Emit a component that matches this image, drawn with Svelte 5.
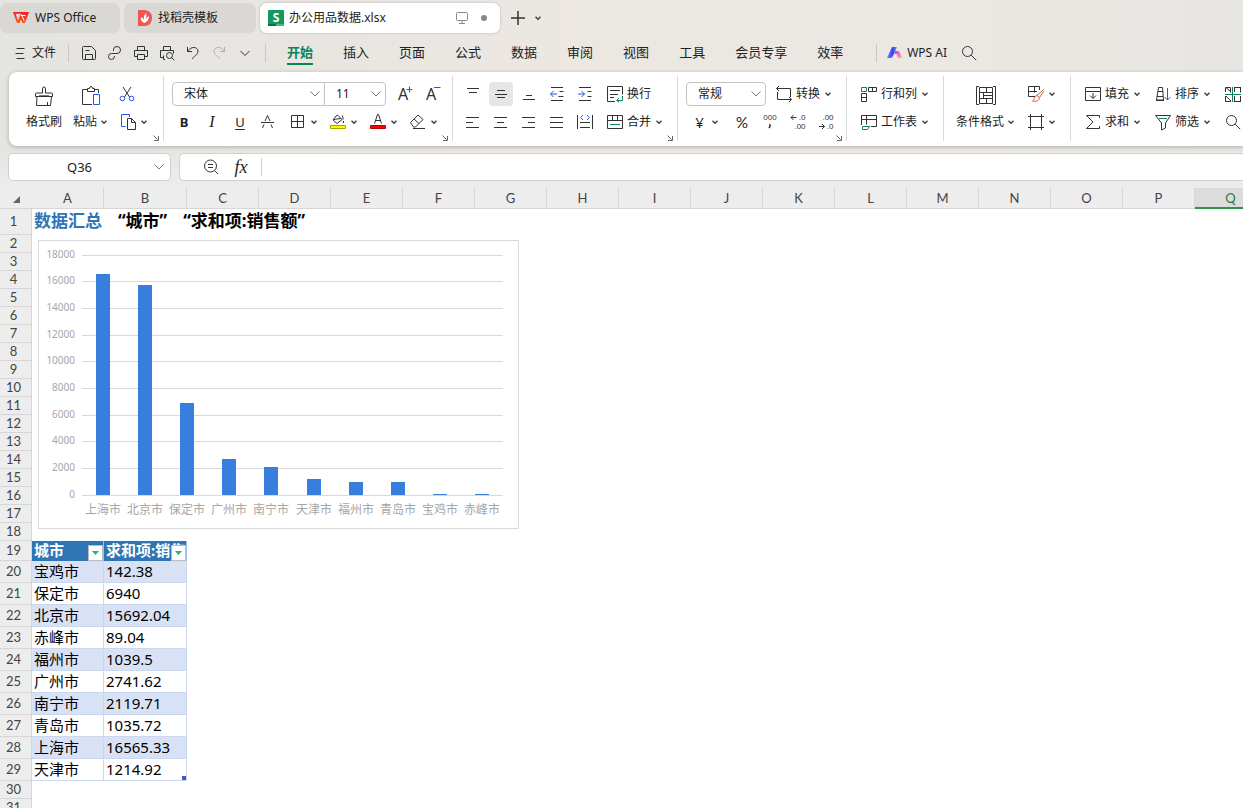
<script>
  const menus = ["开始", "插入", "页面", "公式", "数据", "审阅", "视图", "工具", "会员专享", "效率"];
  const columns = "ABCDEFGHIJKLMNOPQR".split("");

  const records = [
    ["宝鸡市", 142.38],
    ["保定市", 6940],
    ["北京市", 15692.04],
    ["赤峰市", 89.04],
    ["福州市", 1039.5],
    ["广州市", 2741.62],
    ["南宁市", 2119.71],
    ["青岛市", 1035.72],
    ["上海市", 16565.33],
    ["天津市", 1214.92],
  ];
  const ranked = [...records].sort((a, b) => b[1] - a[1]);
  const ticks = [0, 2000, 4000, 6000, 8000, 10000, 12000, 14000, 16000, 18000];

  const plot = { left: 43, right: 465, bottom: 255, height: 240, max: 18000 };
  const step = (plot.right - plot.left) / ranked.length;
  const yOf = (v) => Math.floor(plot.bottom - (v / plot.max) * plot.height);
  const barTop = (v) => Math.round(plot.bottom + 0.5 - (v / plot.max) * (plot.height + 1));
  const xOf = (i) => Math.ceil(plot.left + step * (i + 0.5));

  const ink = "#333";
  const blue = "#2458e6";
  const green = "#0b8457";
  const orange = "#d2622a";

  // every icon is a list of strokes (d), fills (f) or small labels (t)
  const icons = {
    menu: [{ d: "M4.5 3.5h8M3.5 8.5h8M4.5 13.5h8" }],
    save: [{ d: "M1.5 2.5q0-1 1-1h8l4 4v8q0 1-1 1h-11q-1 0-1-1zM4.5 14v-4.5h7V14M4.5 5.5h4" }],
    share: [{ d: "M6.5 6V4.5Q6.5 1.5 10 1.5Q13.5 1.5 13.5 5Q13.5 8.5 10 8.5H4.5Q1.5 8.500 1.5 11.5Q1.5 14.5 4.500 14.5Q7.5 14.5 7.5 11" }],
    print: [{ d: "M4.5 5.5v-4h7v4M4.5 11.5h-3v-6h13v6h-3M4.5 9.5h7v5h-7z" }],
    preview: [{ d: "M4.5 5.5v-4h7v4M4.5 12.5h-3v-7h13v3M6 14.5H4.5v-4M13.5 10.5a3 3 0 1 1-6 0a3 3 0 1 1 6 0M12.7 12.7l2.5 2.5" }],
    undo: [{ d: "M2.5 2v4.500h4.5M2.8 6.2C6 1 12.5 1.500 13 6c0 4-4 5-6 8" }],
    redo: [{ d: "M13.5 2v4.500h-4.5M13.2 6.2C10 1 3.5 1.500 3 6c0 4 4 5 6 8", c: "#b2b0ad" }],
    down: [{ d: "M3.5 6l4.5 4.5L12.5 6" }],
    search: [{ d: "M11.5 6.5a5 5 0 1 1-10 0a5 5 0 1 1 10 0M10.2 10.2l5 5" }],
    monitor: [{ d: "M2.5 3.5q0-1 1-1h9q1 0 1 1v6q0 1-1 1h-9q-1 0-1-1zM8 10.5v3M5 13.5h6", c: "#888" }],
    plus: [{ d: "M8 1v14M1 8h14", w: 1.5 }],
    cut: [
      { d: "M3 1l6.5 10M11 1L4.5 11" },
      { d: "M4.7 12.5a2.300 2.300 0 1 1-4.600 0a2.300 2.300 0 1 1 4.600 0M13.9 12.5a2.300 2.300 0 1 1-4.600 0a2.300 2.300 0 1 1 4.600 0", c: blue },
    ],
    copy: [
      { d: "M5.5 12.500H1.5V.5h8V3", c: blue },
      { d: "M7.500 4.5h4l4 4v7h-8zM11.5 4.5v4h4" },
    ],
    border: [{ d: "M1.5 1.5h12v12h-12zM7.5 1.5v12M1.5 7.5h12" }],
    fill: [
      { d: "M6 2L3 6l4 3.500l5-4L7.5 1zM3.500 5.500l7.500-1M12 1.500q1.500 2 1 4M13.500 7v2" },
      { f: "M1 11h14q1 0 1 1v2q0 1-1 1H1q-1 0-1-1v-2q0-1 1-1z", c: "#a8a800" },
      { f: "M1 12h14v2H1z", c: "#ff0" },
    ],
    color: [
      { d: "M4.500 9.500L7.500 .500h1L11.500 9.500M5.500 6.500h5" },
      { f: "M1 11h14q1 0 1 1v2q0 1-1 1H1q-1 0-1-1v-2q0-1 1-1z", c: "#b00" },
      { f: "M1 12h14v2H1z", c: "red" },
    ],
    eraser: [{ d: "M.5 8.5L8 1l5 4.500L5.5 13H3.5zM4 5l5 4.500M3 14.5h12" }],
    strike: [{ d: "M1 8.5h13M5 7L7.500 1.500L10 7M4 10.500L2.500 14M11 10.500L12.500 14" }],
    grow: [{ t: "A", x: 6, y: 14, s: 16 }, { d: "M9.500 3.5h6M12.5 .5v6", c: blue }],
    shrink: [{ t: "A", x: 6, y: 14, s: 16 }, { d: "M9 1.5h6.5", c: blue }],
    top: [{ d: "M2 2.5h12M4 6.5h8" }],
    middle: [{ d: "M4 4.5h8M2 8.5h12M4 11.5h8" }],
    bottom: [{ d: "M5 9.5h6M2 13.5h12" }],
    outdent: [
      { d: "M2 1.5h12M10.5 5.5h4M9.5 10.5h5M2 14.5h12" },
      { d: "M8 8H1.5M4.5 5L1.5 8l3 3", c: blue },
    ],
    indent: [
      { d: "M2 1.5h12M10.5 5.5h4M10.5 10.5h4M2 14.5h12" },
      { d: "M1 8h6.5M4.5 5l3 3l-3 3", c: blue },
    ],
    left: [{ d: "M1 3.5h13M1 8.5h7M1 13.5h13" }],
    center: [{ d: "M1 3.5h13M4 8.5h7M1 13.5h13" }],
    right: [{ d: "M1 3.5h13M7 8.5h7M1 13.5h13" }],
    justify: [{ d: "M1 3.5h13M1 8.5h13M1 13.5h13" }],
    spread: [
      { d: "M.5 1v14M15.5 1v14M3 8.5h10M3 13.5h10" },
      { d: "M6 1L3.5 3.5L6 6M10 1l2.5 2.5L10 6", c: blue },
    ],
    wrap: [
      { d: "M8 15.5H.5V.5h15v8M3 4.5h10M3 8.5h8M3 11.5h4" },
      { d: "M15.5 10v4.5H10M12 12l-2.5 2.5L12 16", c: green },
    ],
    merge: [
      { d: "M.5 1.5h15v13H.5zM.5 6.5h15M5.5 1.5v5M10.5 1.5v5" },
      { d: "M3 10.5h10", c: green },
    ],
    convert: [{ d: "M14.5 5V2.500H.5M3 0L.5 2.500L3 5M1.500 6v7.500H15.500M13 11l2.5 2.5l-2.5 2.5M14.500 5v6" }],
    comma: [{ t: "000", x: 8, y: 6, s: 8 }, { d: "M8 10v2.500L7 14", w: 1.500 }],
    decInc: [{ d: "M6.500 3.5H1M3.5 1L1 3.5L3.5 6" }, { t: ".0", x: 12, y: 6, s: 8 }, { t: ".00", x: 10, y: 15, s: 8 }],
    decDec: [{ d: "M1 12.5h5.500M4 10L6.500 12.5L4 15" }, { t: ".00", x: 10, y: 6, s: 8 }, { t: ".0", x: 12, y: 15, s: 8 }],
    rowcol: [
      { d: "M7.5 1.5h8v4h-8zM11.5 1.5v4M.5 7.500h5v8h-5zM.5 11.5h5" },
      { d: "M.5 1.5h5v4h-5z", c: green },
    ],
    worksheet: [
      { d: "M.5 11V1.5h15v11H10M.5 5.5h15M5.5 1.5v9" },
      { d: "M1.5 12.5h7l-2 3h-5z", c: green },
    ],
    tableStyle: [
      { d: "M7 10.5H.5v-10h11V4M.5 5.5H9M6.500 .5v6" },
      { d: "M15.5 3.5L9 9.5l2.5 2L16 5M9 9.5c-3 0-2 4-4.5 5.5c4 1 6.5 0 7-3.5", c: orange },
    ],
    cell: [{ d: "M2.500 0v16M13.500 0v16M0 2.500h16M0 13.500h16" }],
    fillDown: [{ d: "M.5 5.5v9h15v-9M.5 5.5v-4h15v4M.5 5.5h15M8 7v5.5M5 9.5l3 3l3-3" }],
    sort: [
      { d: "M3.5 1.5h4l1 12.5h-7l2-12.5M1 14.5h8M3 5.5h5M2 10.5h6" },
      { d: "M12.5 2v12M9.5 11l3 3l3-3", c: blue },
    ],
    sum: [{ d: "M14.5 4V1.5h-13L8 8l-6.500 6.5h13V12" }],
    filter: [{ d: "M.5 1.5h15L10.5 9v5l-4 2V9z" }, { d: "M4 4.5h8", c: green }],
    freeze: [
      { d: "M6 6L1 1.5M.5 6V1.5h5v5M10 1.500h6M15.500 1.500v5M.5 10v5.5H6M1 10l5 5M10 15.5h6M15.500 15.500V10M9.500 1v5M9.500 10v6" },
      { d: "M0 8.5h16M7.500 1v15", c: green },
    ],
    zoom: [{ d: "M13.5 7a6 6 0 1 1-12 0a6 6 0 1 1 12 0M11.5 11.5l3.5 3.5M5 5.5h5M5 8.5h5" }],
    brush: [
      { d: "M8.5 7V3q0-2 1.5-2t1.5 2v4h6q1 0 1 1v2.5h-17V8q0-1 1-1h6M3 10.5L2.5 19.5h14l1-9M13.5 16v3" },
      { d: "M5 9.500h10", c: orange },
    ],
    paste: [
      { d: "M6 3.5H1.5v15H11M14 3.5h3.5V7M6.5 5.5v-3h2q0-2 1.5-2t1.5 2h2v3z" },
      { d: "M12.5 8.5h6v10h-6z", c: blue },
    ],
    conditional: [{ d: "M3 .5H.5v18H3M17 .5h2.500v18H17M3.5 1.5h13v5h-13zM10.5 1.5v5M3.5 6.5v11M3.5 12.5h13M7.500 6.500v6M7.500 9.500h9M16.500 6.500v11M3.500 17.500h13M10.500 12.500v5" }],
  };

  const fontButtons = [
    ["border", "边框"],
    ["fill", "填充颜色"],
    ["color", "字体颜色"],
    ["eraser", "清除"],
  ];
  const alignTop = [["top", "顶端对齐"], ["middle", "垂直居中"], ["bottom", "底端对齐"], ["outdent", "减少缩进"], ["indent", "增加缩进"]];
  const alignBottom = [["left", "左对齐"], ["center", "居中"], ["right", "右对齐"], ["justify", "两端对齐"], ["spread", "分散对齐"]];

  let active = $state("开始");
  let cellName = $state("Q36");
  let formula = $state("");
</script>

{#snippet icon(name, size = 16)}
  <svg class="icon" width={size} height={size} viewBox="0 0 {size} {size}" aria-hidden="true">
    {#each icons[name] as p}
      {#if p.d}
        <path d={p.d} fill="none" stroke={p.c ?? ink} stroke-width={p.w ?? 1} />
      {:else if p.f}
        <path d={p.f} fill={p.c} />
      {:else}
        <text class:tiny={p.s < 10} x={p.x} y={p.y} font-size={p.s} text-anchor="middle" fill={ink}>{p.t}</text>
      {/if}
    {/each}
  </svg>
{/snippet}

{#snippet chevron()}
  <svg class="chevron" width="8" height="8" viewBox="0 0 8 8" aria-hidden="true">
    <path d="M1.5 2.8L4 5.2L6.5 2.8" fill="none" stroke="#444" stroke-width="1.5" />
  </svg>
{/snippet}

{#snippet tool(name, label, text = "", more = false)}
  <button class="tool" aria-label={label}>
    {@render icon(name)}
    {#if text}<span>{text}</span>{/if}
    {#if more}{@render chevron()}{/if}
  </button>
{/snippet}

{#snippet picker(id, label, value)}
  <label class="picker {id}">
    <select aria-label={label}><option>{value}</option></select>
    <svg width="10" height="6" viewBox="0 0 10 6" aria-hidden="true">
      <path d="M.5 .5L5 5L9.5 .5" fill="none" stroke="#777" />
    </svg>
  </label>
{/snippet}

{#snippet launcher()}
  <button class="launcher" aria-label="更多设置">
    <svg width="6" height="6" viewBox="0 0 6 6" aria-hidden="true">
      <path d="M.5 .5l4 4M5.5 1v4.5H1" fill="none" stroke="#666" />
    </svg>
  </button>
{/snippet}

<div class="window">
  <header>
    <nav class="tabs">
      <button class="tab home">
        <svg width="16" height="12" viewBox="0 0 16 12" aria-hidden="true">
          <defs>
            <linearGradient id="wps" x2="0" y2="1"><stop stop-color="#f01c28" /><stop offset="1" stop-color="#ff5a14" /></linearGradient>
          </defs>
          <path d="M0 0h16l-4 11H9.500L8 7.500L6.500 11H4zM2.500 1.800L5 8.500L8 1.800z" fill="url(#wps)" fill-rule="evenodd" />
          <path d="M8 3.500h4.500M8.500 2.500l2.500 6" fill="none" stroke="#fff" stroke-width="1" />
        </svg>
        <span>WPS Office</span>
      </button>
      <button class="tab store">
        <svg width="14" height="16" viewBox="0 0 14 16" aria-hidden="true">
          <path d="M0 0h7q7 1 7 8t-7 8H0z" fill="#f25555" />
          <path d="M6.5 13Q2 11 3 7q2 1 3 3Q5 6 8 3q1 3 0 6q1-2 3-3q0 5-4.500 7z" fill="#fff" />
        </svg>
        <span>找稻壳模板</span>
      </button>
      <button class="tab file">
        <svg width="16" height="16" viewBox="0 0 16 16" aria-hidden="true">
          <rect width="16" height="16" rx="1" fill="#12995f" />
          <path d="M0 14h8v2H0z" fill="#067344" />
          <path d="M8 14h8v2H8z" fill="#3fbd83" />
          <text x="8" y="12" font-size="12" font-weight="700" text-anchor="middle" fill="#fff">S</text>
        </svg>
        <span>办公用品数据.xlsx</span>
        <span class="state">{@render icon("monitor")}<i class="dot"></i></span>
      </button>
      <button class="add" aria-label="新建">{@render icon("plus")}</button>
      <button class="add list" aria-label="标签列表">{@render chevron()}</button>
    </nav>

    <nav class="menu">
      <button class="filemenu">{@render icon("menu")}<span>文件</span></button>
      <span class="rule"></span>
      <div class="quick">
        {#each [["save", "保存"], ["share", "输出"], ["print", "打印"], ["preview", "打印预览"], ["undo", "撤销"], ["redo", "恢复"], ["down", "自定义"]] as [name, label]}
          <button aria-label={label}>{@render icon(name)}</button>
        {/each}
      </div>
      <span class="rule"></span>
      <div class="items">
        {#each menus as m}
          <button class:active={m === active} onclick={() => (active = m)}>{m}</button>
        {/each}
      </div>
      <span class="rule"></span>
      <button class="ai">
        <svg width="16" height="12" viewBox="0 0 16 12" aria-hidden="true">
          <defs>
            <linearGradient id="ai-a"><stop stop-color="#5a8bff" /><stop offset=".6" stop-color="#3a3cf5" /><stop offset="1" stop-color="#35c0ff" /></linearGradient>
            <linearGradient id="ai-b" x2=".6" y2="1"><stop stop-color="#e520f0" /><stop offset="1" stop-color="#ffad90" /></linearGradient>
          </defs>
          <path d="M5 0h5L6 9q-1 2-3 2H0z" fill="url(#ai-a)" />
          <path d="M8 4h3q1 0 2 2l2.500 5H11L9.500 7H7z" fill="url(#ai-b)" />
        </svg>
        <span>WPS AI</span>
      </button>
      <button aria-label="搜索">{@render icon("search")}</button>
    </nav>
  </header>

  <section class="ribbon">
    <div class="group clip">
      <button class="big">{@render icon("brush", 20)}<span>格式刷</span></button>
      <button class="big paste">{@render icon("paste", 20)}<span>粘贴{@render chevron()}</span></button>
      <div class="stack">
        {@render tool("cut", "剪切")}
        {@render tool("copy", "复制", "", true)}
      </div>
      {@render launcher()}
    </div>

    <div class="group stack font">
      <div class="line">
        {@render picker("family", "字体", "宋体")}
        {@render picker("size", "字号", "11")}
        <div class="line scale">
          {@render tool("grow", "增大字号")}
          {@render tool("shrink", "减小字号")}
        </div>
      </div>
      <div class="line marks">
        <button class="tool"><b>B</b></button>
        <button class="tool"><em>I</em></button>
        <button class="tool"><u>U</u></button>
        {@render tool("strike", "删除线")}
        <div class="line split">
          {#each fontButtons as [name, label]}{@render tool(name, label, "", true)}{/each}
        </div>
      </div>
      {@render launcher()}
    </div>

    <div class="group align">
      <div class="stack">
        <div class="line">
          {#each alignTop as [name, label]}
            <span class="slot" class:on={name === "middle"}>{@render tool(name, label)}</span>
          {/each}
        </div>
        <div class="line">
          {#each alignBottom as [name, label]}
            <span class="slot">{@render tool(name, label)}</span>
          {/each}
        </div>
      </div>
      <div class="stack">
        {@render tool("wrap", "换行", "换行")}
        {@render tool("merge", "合并", "合并", true)}
      </div>
      {@render launcher()}
    </div>

    <div class="group stack number">
      <div class="line">
        {@render picker("format", "数字格式", "常规")}
        {@render tool("convert", "转换", "转换", true)}
      </div>
      <div class="line marks">
        <button class="tool yen"><span>¥</span>{@render chevron()}</button>
        <button class="tool"><span class="percent">%</span></button>
        {@render tool("comma", "千位分隔")}
        {@render tool("decInc", "增加小数位")}
        {@render tool("decDec", "减少小数位")}
      </div>
      {@render launcher()}
    </div>

    <div class="group stack sheets">
      {@render tool("rowcol", "行和列", "行和列", true)}
      {@render tool("worksheet", "工作表", "工作表", true)}
    </div>

    <div class="group styles">
      <button class="big">{@render icon("conditional", 20)}<span>条件格式{@render chevron()}</span></button>
      <div class="stack">
        {@render tool("tableStyle", "表格样式", "", true)}
        {@render tool("cell", "单元格", "", true)}
      </div>
    </div>

    <div class="group edit">
      <div class="stack">
        {@render tool("fillDown", "填充", "填充", true)}
        {@render tool("sum", "求和", "求和", true)}
      </div>
      <div class="stack">
        {@render tool("sort", "排序", "排序", true)}
        {@render tool("filter", "筛选", "筛选", true)}
      </div>
      <div class="stack">
        {@render tool("freeze", "冻结")}
        {@render tool("search", "查找")}
      </div>
    </div>
  </section>

  <div class="formula">
    <label class="name">
      <input aria-label="名称框" bind:value={cellName} />
      <svg width="10" height="6" viewBox="0 0 10 6" aria-hidden="true">
        <path d="M.5 .5L5 5L9.5 .5" fill="none" stroke="#777" />
      </svg>
    </label>
    <div class="expr">
      <button aria-label="浏览公式结果">{@render icon("zoom")}</button>
      <button class="fx">fx</button>
      <input aria-label="编辑栏" bind:value={formula} />
    </div>
  </div>

  <main>
    <table>
      <colgroup>
        <col class="index" />
        {#each columns as c}<col class:wide={c === "B"} />{/each}
      </colgroup>
      <thead>
        <tr>
          <th class="corner"><svg width="7" height="7" viewBox="0 0 7 7" aria-hidden="true"><path d="M7 0v7H0z" fill="#666" /></svg></th>
          {#each columns as c}<th class:selected={c === "Q"}>{c}</th>{/each}
        </tr>
      </thead>
      <tbody>
        <tr class="title">
          <th>1</th>
          <td colspan={columns.length}>
            <div class="heading"><span>数据汇总</span><span>“城市”</span><span>“求和项:销售额”</span></div>
          </td>
        </tr>
        {#each { length: 17 } as _, i}
          <tr><th>{i + 2}</th><td colspan={columns.length}></td></tr>
        {/each}
        <tr class="fields">
          <th>19</th>
          {#each ["城市", "求和项:销售额"] as f}
            <td>
              <div class="field">
                {f}
                <button aria-label="筛选{f}">
                  <svg width="7" height="4" viewBox="0 0 7 4" aria-hidden="true"><path d="M0 0h7L3.5 4z" fill="#1fb574" /></svg>
                </button>
              </div>
            </td>
          {/each}
        </tr>
        {#each records as [city, sales], i}
          <tr class="record" class:band={i % 2 === 0}>
            <th>{i + 20}</th>
            <td>{city}</td>
            <td class:last={i === records.length - 1}>{sales}</td>
          </tr>
        {/each}
        <tr><th>30</th></tr>
        <tr><th>31</th></tr>
        <tr><th>32</th></tr>
      </tbody>
    </table>

    <svg class="chart" width="481" height="289" viewBox="0 0 481 289" role="img" aria-label="各城市销售额">
      <rect x=".5" y=".5" width="480" height="288" fill="#fff" stroke="#d9d9d9" />
      {#each ticks as t}
        <path d="M{plot.left + 1} {yOf(t) + 0.5}H{plot.right}" stroke="#d9d9d9" />
        <text class="tick" x="37" y={yOf(t) + 3}>{t}</text>
      {/each}
      {#each ranked as [city, sales], i}
        <rect x={xOf(i) - 7} y={barTop(sales)} width="14" height={plot.bottom - barTop(sales)} fill="#387edc" />
        <text class="city" x={xOf(i)} y="274">{city}</text>
      {/each}
    </svg>
  </main>
</div>

<style>
  :global(body) {
    margin: 0;
    overflow: hidden;
  }

  .window {
    height: 100vh;
    display: flex;
    flex-direction: column;
    background: linear-gradient(90deg, #e4e4e1, #ece7e1 45%, #ebe7e3 80%, #e7e6e2);
    color: #222;
    font: 12px/16px "Noto Sans", "Noto Sans CJK SC", sans-serif;
  }

  button,
  input,
  select {
    margin: 0;
    padding: 0;
    border: 0;
    background: none;
    color: inherit;
    font: inherit;
  }

  button {
    display: inline-flex;
    align-items: center;
    justify-content: center;
    white-space: nowrap;
  }

  svg {
    overflow: visible;
  }

  .icon,
  .chevron {
    display: block;
    flex: none;
  }

  .tiny {
    font-family: "Liberation Sans", sans-serif;
  }

  .tabs {
    display: flex;
    height: 36px;
    align-items: center;
  }

  .tab {
    height: 30px;
    margin-right: 4px;
    border-radius: 7px;
    background: #d9d8d5;
    justify-content: flex-start;
    gap: 6px;
  }

  .home {
    width: 120px;
    padding-left: 13px;
  }

  .store {
    width: 132px;
    padding-left: 14px;
  }

  .file {
    width: 240px;
    padding: 0 13px 0 8px;
    background: #fff;
    box-shadow: 0 0 3px #0003;
    gap: 5px;
  }

  .state {
    display: flex;
    flex: 1;
    justify-content: flex-end;
    align-items: center;
    gap: 11px;
  }

  .dot {
    width: 6px;
    height: 6px;
    border-radius: 50%;
    background: #888;
  }

  .add {
    margin-left: 6px;
  }

  .list {
    margin-left: 8px;
  }

  .menu {
    display: flex;
    height: 34px;
    align-items: center;
    padding-left: 12px;
  }

  .filemenu {
    gap: 4px;
    margin-right: 12px;
  }

  .rule {
    width: 1px;
    height: 18px;
    background: #c9c7c4;
  }

  .quick {
    display: flex;
    gap: 10px;
    padding: 0 12px;
  }

  .items {
    display: flex;
    gap: 30px;
    padding: 0 33px 0 21px;
    font-size: 13px;
  }

  .items button {
    padding: 3px 0 3px;
    border-bottom: 2px solid transparent;
  }

  .items .active {
    border-color: #0b8457;
    color: #0b8457;
    font-weight: 700;
  }

  .ai {
    gap: 4px;
    margin: 0 14px 0 10px;
  }

  .ribbon {
    display: flex;
    flex: none;
    height: 74px;
    margin: 2px 0 0 9px;
    border-radius: 8px 0 0 8px;
    background: #fff;
    box-shadow: 0 1px 4px #0004;
    overflow: hidden;
  }

  .group {
    position: relative;
    box-sizing: border-box;
    display: flex;
    flex: none;
    height: 65px;
    margin-top: 4px;
    padding-top: 4px;
    border-right: 1px solid #d9d9d9;
  }

  .group:last-child {
    border: 0;
  }

  .stack {
    display: flex;
    flex-direction: column;
    align-items: flex-start;
  }

  .line {
    display: flex;
    height: 28px;
    align-items: center;
  }

  .tool {
    height: 28px;
    gap: 4px;
    font-size: 12px;
  }

  .big {
    flex-direction: column;
    height: 56px;
    gap: 8px;
    justify-content: flex-start;
    padding-top: 6px;
  }

  .big span {
    display: flex;
    align-items: center;
    gap: 3px;
    line-height: 16px;
  }

  .clip {
    width: 155px;
    padding-left: 17px;
  }

  .clip .paste {
    margin: 0 12px 0 11px;
  }

  .launcher {
    position: absolute;
    right: 4px;
    bottom: 0;
  }

  .font {
    width: 289px;
    padding-left: 8px;
  }

  .picker {
    position: relative;
    box-sizing: border-box;
    height: 24px;
    border: 1px solid #c4c4c4;
    border-radius: 4px;
  }

  .picker select {
    width: 100%;
    height: 22px;
    padding-left: 11px;
    appearance: none;
  }

  .picker svg,
  .name svg {
    position: absolute;
    right: 4px;
    top: 8px;
    pointer-events: none;
  }

  .family {
    width: 153px;
    border-radius: 4px 0 0 4px;
  }

  .size {
    width: 62px;
    margin-left: -1px;
    border-radius: 0 4px 4px 0;
  }

  .format {
    width: 80px;
    margin-right: 10px;
  }

  .scale {
    padding-left: 5px;
  }

  .scale .tool,
  .marks > .tool {
    width: 28px;
  }

  .font .marks {
    margin-left: -2px;
  }

  .marks b {
    font-size: 13px;
  }

  .marks em {
    font: italic 16px "Liberation Serif", serif;
  }

  .marks u {
    font-size: 13px;
    text-underline-offset: 2px;
  }

  .split .tool {
    width: 40px;
  }

  .split {
    padding-left: 2px;
  }

  .align {
    width: 225px;
    padding-left: 6px;
    gap: 8px;
  }

  .slot {
    display: flex;
    width: 24px;
    height: 24px;
    margin: 0 2px;
    align-items: center;
    justify-content: center;
    border-radius: 4px;
  }

  .on {
    background: #e6e6e6;
  }

  .number {
    width: 169px;
    padding-left: 8px;
  }

  .marks > .yen {
    width: 42px;
    gap: 7px;
    font-size: 15px;
  }

  .percent {
    font: 15px/16px Lato, sans-serif;
  }

  .sheets {
    width: 97px;
    padding-left: 14px;
  }

  .styles {
    width: 127px;
    padding-left: 12px;
    gap: 13px;
  }

  .edit {
    padding-left: 14px;
    gap: 14px;
  }

  .formula {
    display: flex;
    flex: none;
    gap: 8px;
    padding: 7px 0 7px 8px;
    background: linear-gradient(#ebebeb00, #ededed);
  }

  .name,
  .expr {
    position: relative;
    box-sizing: border-box;
    height: 28px;
    border: 1px solid #cfcfcf;
    border-radius: 5px;
    background: #fff;
  }

  .name {
    width: 163px;
  }

  .name input {
    box-sizing: border-box;
    width: 100%;
    height: 26px;
    padding-right: 20px;
    text-align: center;
    font-size: 13px;
  }

  .name svg {
    top: 10px;
    right: 6px;
  }

  .expr {
    display: flex;
    flex: 1;
    align-items: center;
    padding-left: 23px;
    border-right: 0;
    border-radius: 5px 0 0 5px;
  }

  .fx {
    width: 30px;
    margin: 0 5px 0 7px;
    font: italic 18px/20px "Liberation Serif", serif;
  }

  .expr input {
    flex: 1;
    height: 18px;
    padding-left: 6px;
    border-left: 1px solid #d0d0d0;
  }

  main {
    position: relative;
    flex: 1;
    overflow: hidden;
    background: #fff;
  }

  /* the columns alone decide how wide the grid is */
  table {
    width: 0;
    table-layout: fixed;
    border-spacing: 0;
  }

  col {
    width: 72px;
  }

  .index {
    width: 32px;
  }

  .wide {
    width: 83px;
  }

  tr {
    height: 18px;
  }

  th,
  td {
    box-sizing: border-box;
    padding: 0;
    line-height: 16px;
  }

  th {
    border-right: 1px solid #d6d6d6;
    border-bottom: 1px solid #d6d6d6;
    background: #ededed;
    color: #444;
    font: 13px/16px Lato, sans-serif;
  }

  tbody th {
    padding: 0 4px 1px 0;
  }

  thead tr {
    height: 21px;
  }

  .corner {
    border-right: 0;
  }

  .selected {
    border-bottom: 2px solid #2f9545;
    background: #dcdcdc;
    color: #1c7f38;
  }

  .title {
    height: 26px;
  }

  .heading {
    display: flex;
    gap: 16px;
    padding: 0 0 2px 2px;
    color: #000;
    font-size: 17px;
    font-weight: 700;
    line-height: 22px;
    white-space: nowrap;
  }

  .heading span:first-child {
    color: #2e75b6;
  }

  .fields {
    height: 20px;
  }

  .fields td {
    border-right: 1px solid #9dc0e4;
    background: #2e75b6;
    color: #fff;
    font-size: 15px;
    font-weight: 700;
  }

  .field {
    position: relative;
    height: 20px;
    padding-left: 2px;
    overflow: hidden;
    line-height: 18px;
    white-space: nowrap;
  }

  .field button {
    position: absolute;
    right: 0;
    bottom: 0;
    width: 15px;
    height: 16px;
    border: 1px solid #bbb;
    background: #fff;
  }

  .record {
    height: 22px;
  }

  .record td {
    padding: 0 0 2px 2px;
    border-right: 1px solid #c9d7f0;
    border-bottom: 1px solid #c9d7f0;
    color: #000;
    font-size: 15px;
    line-height: 18px;
  }

  .band td {
    background: #d9e2f5;
  }

  .record .last {
    background: linear-gradient(#4757b5, #4757b5) right bottom / 4px 4px no-repeat;
  }

  .chart {
    position: absolute;
    left: 38px;
    top: 52px;
  }

  .chart text {
    fill: #a6a6a6;
  }

  .tick {
    font-size: 10px;
    text-anchor: end;
  }

  .city {
    font-size: 12px;
    text-anchor: middle;
  }
</style>
